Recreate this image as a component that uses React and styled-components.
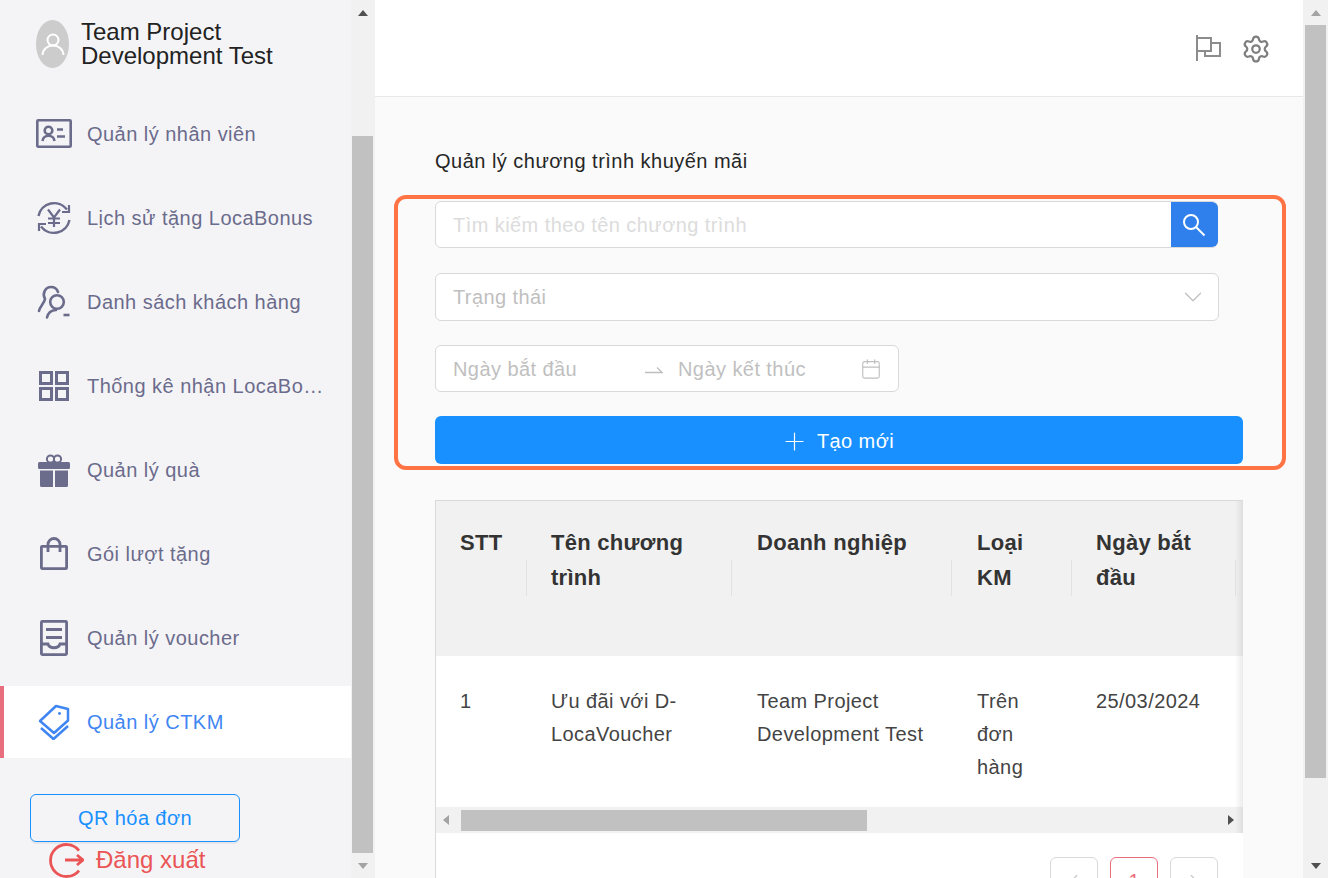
import { createGlobalStyle, styled } from "styled-components";
import { Calendar, ChevronDown, ChevronLeft, ChevronRight, Plus, Settings } from "lucide-react";

const GlobalStyle = createGlobalStyle`
  html, body {
    margin: 0;
    padding: 0;
    height: 100%;
    overflow: hidden;
    font-family: "Liberation Sans", Arial, sans-serif;
  }
  * {
    box-sizing: border-box;
  }
`;

const Page = styled.div`
  display: flex;
  width: 1328px;
  height: 878px;
  overflow: hidden;
  background: #fafafa;
`;

const Sidebar = styled.aside`
  display: flex;
  flex: 0 0 351px;
  flex-direction: column;
  min-width: 0;
  background: #f4f4f7;
`;

const Profile = styled.div`
  display: flex;
  align-items: flex-start;
  height: 99px;
  padding: 20px 0 0 36px;
`;

const Avatar = styled.div`
  display: flex;
  align-items: center;
  justify-content: center;
  width: 33px;
  height: 48px;
  margin-right: 12px;
  border-radius: 50%;
  background: #cccccc;
`;

const ProfileName = styled.div`
  color: #222222;
  font-size: 24px;
  line-height: 24px;
`;

const Menu = styled.nav`
  display: flex;
  flex-direction: column;
  gap: 12px;
`;

const MenuRow = styled.div`
  display: flex;
  align-items: center;
  height: 72px;
  padding: 0 26px 0 36px;
  color: ${(p) => (p.$active ? "#3f86f2" : "#6b6b8b")};
  background: ${(p) => (p.$active ? "#ffffff" : "transparent")};
  box-shadow: ${(p) => (p.$active ? "inset 4px 0 0 #e76f7d" : "none")};
`;

const MenuIcon = styled.svg`
  flex: 0 0 36px;
  width: 36px;
  height: 36px;
  margin-right: 15px;
`;

const MenuLabel = styled.span`
  overflow: hidden;
  font-size: 20px;
  letter-spacing: 0.47px;
  line-height: 24px;
  white-space: nowrap;
  text-overflow: ellipsis;
`;

const QrButton = styled.button`
  width: 210px;
  height: 48px;
  margin: 36px 0 0 30px;
  border: 1px solid #1890ff;
  border-radius: 6px;
  color: #1890ff;
  background: transparent;
  box-shadow: 0 2px 0 rgba(0, 0, 0, 0.05);
  font-family: inherit;
  font-size: 20px;
  letter-spacing: 0.4px;
`;

const Logout = styled.div`
  display: flex;
  align-items: center;
  gap: 12px;
  margin-left: 48px;
  color: #ea5455;
  font-size: 24px;
`;

const Rail = styled.div`
  display: flex;
  flex: 0 0 ${(p) => p.$width}px;
  flex-direction: column;
  align-items: center;
  padding-right: 2px;
  padding-left: ${(p) => p.$left}px;
  background: #f1f1f1;
`;

const RailEnd = styled.div`
  display: flex;
  flex: 0 0 25px;
  align-items: center;
  justify-content: center;
  width: 100%;
`;

const RailGap = styled.div`
  flex: 0 0 ${(p) => p.$size}px;
`;

const RailThumb = styled.div`
  width: 100%;
  flex: 0 0 ${(p) => p.$size}px;
  background: #c1c1c1;
`;

const ArrowUp = styled.span`
  border-right: 5.5px solid transparent;
  border-bottom: 6px solid ${(p) => p.$color};
  border-left: 5.5px solid transparent;
`;

const ArrowDown = styled.span`
  border-top: 6px solid ${(p) => p.$color};
  border-right: 5.5px solid transparent;
  border-left: 5.5px solid transparent;
`;

const Main = styled.main`
  display: flex;
  flex: 1;
  flex-direction: column;
  min-width: 0;
`;

const TopBar = styled.header`
  display: flex;
  flex: 0 0 97px;
  align-items: flex-start;
  justify-content: flex-end;
  gap: 20px;
  padding: 34px 32px 0 0;
  border-bottom: 1px solid #e8e8e8;
  background: #ffffff;
`;

const Content = styled.div`
  padding: 52px 17px 0 19px;
`;

const Title = styled.h1`
  margin: 0 0 22px 41px;
  color: #262626;
  font-size: 20px;
  font-weight: 400;
  letter-spacing: 0.48px;
  line-height: 24px;
`;

const FormBox = styled.section`
  display: flex;
  flex-direction: column;
  height: 275px;
  padding: 2px 39px 0 37px;
  border: 4px solid #ff7345;
  border-radius: 12px;
`;

const SearchField = styled.div`
  display: flex;
  width: 783px;
  height: 47px;
  margin-bottom: 25px;
  border: 1px solid #d9d9d9;
  border-radius: 6px;
  background: #ffffff;
`;

const TextInput = styled.input`
  flex: ${(p) => (p.$width ? `0 0 ${p.$width}px` : "1")};
  min-width: 0;
  height: 100%;
  padding: 1px 0 0 ${(p) => p.$pad}px;
  border: 0;
  outline: 0;
  background: transparent;
  font-family: inherit;
  font-size: 20px;
  letter-spacing: 0.43px;

  &::placeholder {
    color: ${(p) => p.$hint};
    opacity: 1;
  }
`;

const SearchButton = styled.button`
  display: flex;
  flex: 0 0 47px;
  align-items: center;
  justify-content: center;
  margin-right: -1px;
  padding: 0 2px 0 0;
  border: 0;
  border-radius: 0 6px 6px 0;
  background: #2f80ed;
`;

const SelectField = styled.div`
  display: flex;
  align-items: center;
  justify-content: space-between;
  width: 784px;
  height: 48px;
  margin-bottom: 24px;
  padding: 0 10px 0 17px;
  border: 1px solid #d9d9d9;
  border-radius: 6px;
  color: #bfbfbf;
  background: #ffffff;
  font-size: 20px;
  letter-spacing: 0.4px;
`;

const DateField = styled.div`
  display: flex;
  align-items: center;
  justify-content: flex-start;
  width: 464px;
  height: 47px;
  margin-bottom: 24px;
  border: 1px solid #d9d9d9;
  border-radius: 6px;
  background: #ffffff;
`;

const DateArrow = styled.svg`
  flex: 0 0 18px;
  width: 18px;
  height: 12px;
  margin: 2px 15px 0 0;
`;

const CreateButton = styled.button`
  display: flex;
  align-items: center;
  justify-content: center;
  gap: 8px;
  width: 808px;
  height: 48px;
  padding: 2px 4px 0 0;
  border: 0;
  border-radius: 6px;
  color: #ffffff;
  background: #1890ff;
  font-family: inherit;
  font-size: 20px;
  letter-spacing: 0.4px;
`;

const TableCard = styled.section`
  position: relative;
  width: 808px;
  margin: 30px 0 0 41px;
  overflow: hidden;
  border-top: 1px solid #d9d9d9;
  border-left: 1px solid #d9d9d9;
  background: #ffffff;

  &::after {
    content: "";
    position: absolute;
    top: 0;
    right: 0;
    width: 8px;
    height: 332px;
    background: linear-gradient(to right, rgba(0, 0, 0, 0), rgba(0, 0, 0, 0.08));
  }
`;

const TableRow = styled.div`
  display: grid;
  grid-template-columns: 91px 205px 220px 120px 164px;
  height: ${(p) => p.$height}px;
  background: ${(p) => p.$bg};
`;

const HeadCell = styled.div`
  position: relative;
  padding: 24px 24px 0;
  color: #333333;
  font-size: 22px;
  font-weight: 700;
  letter-spacing: 0.28px;
  line-height: 35px;

  &:nth-child(3),
  &:nth-child(4) {
    padding-left: 25px;
  }

  &::after {
    content: "";
    position: absolute;
    top: 59px;
    right: 0;
    width: 1px;
    height: 36px;
    background: #e2e2e2;
  }
`;

const BodyCell = styled.div`
  padding: 29px 24px 0;
  color: #444444;
  font-size: 20px;
  letter-spacing: 0.42px;
  line-height: 33px;

  &:nth-child(3),
  &:nth-child(4) {
    padding-left: 25px;
  }
`;

const HScroll = styled.div`
  display: flex;
  align-items: center;
  height: 26px;
  padding: 0 9px 0 7px;
  background: #f1f1f1;
`;

const ArrowLeft = styled.span`
  margin-right: 12px;
  border-top: 5.5px solid transparent;
  border-right: 6px solid #a3a3a3;
  border-bottom: 5.5px solid transparent;
`;

const ArrowRight = styled.span`
  margin-left: auto;
  border-top: 5.5px solid transparent;
  border-bottom: 5.5px solid transparent;
  border-left: 6px solid #505050;
`;

const HThumb = styled.div`
  width: 406px;
  height: 21px;
  background: #c1c1c1;
`;

const Pagination = styled.div`
  display: flex;
  justify-content: flex-end;
  gap: 12px;
  height: 45px;
  padding: 24px 25px 0 0;
`;

const PageButton = styled.div`
  display: flex;
  flex: 0 0 48px;
  align-items: center;
  justify-content: center;
  height: 48px;
  border: 1px solid ${(p) => (p.$active ? "#e76f7d" : "#d9d9d9")};
  border-radius: 6px;
  color: ${(p) => (p.$active ? "#e76f7d" : "#c4c4c4")};
  font-size: 20px;
`;

const IdCardIcon = () => (
  <MenuIcon viewBox="0 0 36 36" fill="none" stroke="currentColor">
    <rect x="1.3" y="4.3" width="33.4" height="26.4" rx="1" strokeWidth="2.6" />
    <circle cx="12.5" cy="14.5" r="3.8" strokeWidth="2.6" />
    <path d="M6.500 25c.8-7 11.200-7 12 0M21 13.500h6M21 20.500h8" strokeWidth="2.600" />
  </MenuIcon>
);

const YenIcon = () => (
  <MenuIcon viewBox="0 0 36 36" fill="none" stroke="currentColor" strokeWidth="2.400">
    <path d="M2.500 16A16 16 0 0 1 31 9.500" />
    <path d="M33.500 20A16 16 0 0 1 5 26.500" />
    <path d="M33 5v7h-7M3 31v-7h7" strokeWidth="2.200" />
    <path d="M12 9.500l6 8 6-8M18 17.500V27M12 18.500h12M12 23h12" strokeWidth="2.200" />
  </MenuIcon>
);

const CustomerIcon = () => (
  <MenuIcon viewBox="0 0 36 36" fill="none" stroke="currentColor" strokeWidth="2.600" strokeLinecap="round">
    <circle cx="21" cy="18" r="6.800" />
    <path d="M3 27c1-5 5-7 6-12C6 10 9 3 15 3c3 0 6 2 7 5M11 33.500c1-4.500 4-7.300 9-7.500" />
    <path d="M27.500 31h6" strokeLinecap="butt" />
  </MenuIcon>
);

const GridIcon = () => (
  <MenuIcon viewBox="0 0 36 36" fill="none" stroke="currentColor" strokeWidth="3">
    <rect x="4.500" y="4.500" width="11" height="11" />
    <rect x="20.500" y="4.500" width="11" height="11" />
    <rect x="4.500" y="20.500" width="11" height="11" />
    <rect x="20.500" y="20.500" width="11" height="11" />
  </MenuIcon>
);

const GiftIcon = () => (
  <MenuIcon viewBox="0 0 36 36">
    <circle cx="14.500" cy="7" r="3.600" fill="none" stroke="currentColor" strokeWidth="2" />
    <circle cx="21.500" cy="7" r="3.600" fill="none" stroke="currentColor" strokeWidth="2" />
    <rect x="2" y="10" width="32" height="7" rx="1.500" fill="currentColor" />
    <path d="M4 18.500h13V35H5.500A1.500 1.500 0 0 1 4 33.500zM19 18.500h13v15a1.500 1.500 0 0 1-1.500 1.500H19z" fill="currentColor" />
  </MenuIcon>
);

const BagIcon = () => (
  <MenuIcon viewBox="0 0 36 36" fill="none" stroke="currentColor" strokeWidth="2.800">
    <rect x="5.400" y="10.400" width="25.200" height="22.200" rx=".8" />
    <path d="M12 16V8.500a6 6 0 0 1 12 0V16" />
  </MenuIcon>
);

const VoucherIcon = () => (
  <MenuIcon viewBox="0 0 36 36" fill="none" stroke="currentColor" strokeWidth="2.800">
    <rect x="5.400" y="1.400" width="25.200" height="33.200" rx="1" />
    <path d="M10 9.500h16M10 17.500h16M5 24h7c1.500 5 10.500 5 12 0h7" />
  </MenuIcon>
);

const TagIcon = () => (
  <MenuIcon viewBox="0 0 36 36" fill="none" stroke="currentColor" strokeWidth="2.500" strokeLinejoin="round">
    <path d="M4 17L20 2l12 3v11.500L18 29z" />
    <path d="M5 24l12.500 11L32 22" />
    <circle cx="23.500" cy="9.500" r="1.400" fill="currentColor" stroke="none" />
  </MenuIcon>
);

const LogoutIcon = () => (
  <svg width="36" height="36" viewBox="0 0 36 36" fill="none" stroke="currentColor" strokeWidth="2.800">
    <path d="M31 8.500a16 16 0 1 0 0 20" />
    <path d="M17 18h18M29 13l6 5-6 5" />
  </svg>
);

const AvatarIcon = () => (
  <svg width="26" height="26" viewBox="0 0 26 26" fill="none" stroke="#ffffff" strokeWidth="2">
    <circle cx="13" cy="9" r="5.500" />
    <path d="M2.500 24c.5-6 5-9.500 10.500-9.500S23 18 23.500 24" />
  </svg>
);

const FlagIcon = () => (
  <svg width="26" height="28" viewBox="0 0 26 28" fill="none" stroke="#8c8c8c" strokeWidth="2">
    <path d="M2 1v26M2 4h14v13H2M16 9h9v13H10v-5" />
  </svg>
);

const SearchGlyph = () => (
  <svg width="24" height="24" viewBox="0 0 24 24" fill="none" stroke="#ffffff" strokeWidth="2">
    <circle cx="9" cy="9" r="7" />
    <path d="M14 14l8.500 8.500" />
  </svg>
);

const SwapArrow = () => (
  <DateArrow viewBox="0 0 18 12" fill="none" stroke="#bfbfbf" strokeWidth="1.300">
    <path d="M0 8.500h17l-5-5" />
  </DateArrow>
);

const menuItems = [
  { label: "Quản lý nhân viên", Icon: IdCardIcon },
  { label: "Lịch sử tặng LocaBonus", Icon: YenIcon },
  { label: "Danh sách khách hàng", Icon: CustomerIcon },
  { label: "Thống kê nhận LocaBonus", Icon: GridIcon },
  { label: "Quản lý quà", Icon: GiftIcon },
  { label: "Gói lượt tặng", Icon: BagIcon },
  { label: "Quản lý voucher", Icon: VoucherIcon },
  { label: "Quản lý CTKM", Icon: TagIcon, active: true },
];

const headers = ["STT", "Tên chương trình", "Doanh nghiệp", "Loại KM", "Ngày bắt đầu"];
const row = ["1", "Ưu đãi với D-LocaVoucher", "Team Project Development Test", "Trên đơn hàng", "25/03/2024"];

const App = () => {
  return (
    <Page>
      <GlobalStyle />
      <Sidebar>
        <Profile>
          <Avatar>
            <AvatarIcon />
          </Avatar>
          <ProfileName>
            Team Project
            <br />
            Development Test
          </ProfileName>
        </Profile>
        <Menu>
          {menuItems.map(({ label, Icon, active }) => (
            <MenuRow key={label} $active={active}>
              <Icon />
              <MenuLabel>{label}</MenuLabel>
            </MenuRow>
          ))}
        </Menu>
        <QrButton>QR hóa đơn</QrButton>
        <Logout>
          <LogoutIcon />
          Đăng xuất
        </Logout>
      </Sidebar>
      <Rail $width={24} $left={1}>
        <RailEnd>
          <ArrowUp $color="#505050" />
        </RailEnd>
        <RailGap $size={111} />
        <RailThumb $size={717} />
        <RailEnd>
          <ArrowDown $color="#a3a3a3" />
        </RailEnd>
      </Rail>
      <Main>
        <TopBar>
          <FlagIcon />
          <Settings size={30} color="#7f7f7f" strokeWidth={1.800} />
        </TopBar>
        <Content>
          <Title>Quản lý chương trình khuyến mãi</Title>
          <FormBox>
            <SearchField>
              <TextInput placeholder="Tìm kiếm theo tên chương trình" $hint="#dcdcdc" $pad={17} />
              <SearchButton>
                <SearchGlyph />
              </SearchButton>
            </SearchField>
            <SelectField>
              Trạng thái
              <ChevronDown size={30} color="#bfbfbf" strokeWidth={1} />
            </SelectField>
            <DateField>
              <TextInput placeholder="Ngày bắt đầu" $hint="#bfbfbf" $pad={17} $width={209} />
              <SwapArrow />
              <TextInput placeholder="Ngày kết thúc" $hint="#bfbfbf" $pad={0} $width={182} />
              <Calendar size={22} color="#bfbfbf" strokeWidth={1.200} />
            </DateField>
            <CreateButton>
              <Plus size={29} strokeWidth={1} />
              Tạo mới
            </CreateButton>
          </FormBox>
          <TableCard>
            <TableRow $height={155} $bg="#f1f1f1">
              {headers.map((text) => (
                <HeadCell key={text}>{text}</HeadCell>
              ))}
            </TableRow>
            <TableRow $height={151} $bg="#ffffff">
              {row.map((text) => (
                <BodyCell key={text}>{text}</BodyCell>
              ))}
            </TableRow>
            <HScroll>
              <ArrowLeft />
              <HThumb />
              <ArrowRight />
            </HScroll>
            <Pagination>
              <PageButton>
                <ChevronLeft size={22} strokeWidth={1.200} />
              </PageButton>
              <PageButton $active>1</PageButton>
              <PageButton>
                <ChevronRight size={22} strokeWidth={1.200} />
              </PageButton>
            </Pagination>
          </TableCard>
        </Content>
      </Main>
      <Rail $width={25} $left={2}>
        <RailEnd>
          <ArrowUp $color="#a3a3a3" />
        </RailEnd>
        <RailThumb $size={753} />
        <RailGap $size={75} />
        <RailEnd>
          <ArrowDown $color="#505050" />
        </RailEnd>
      </Rail>
    </Page>
  );
};

export default App;
